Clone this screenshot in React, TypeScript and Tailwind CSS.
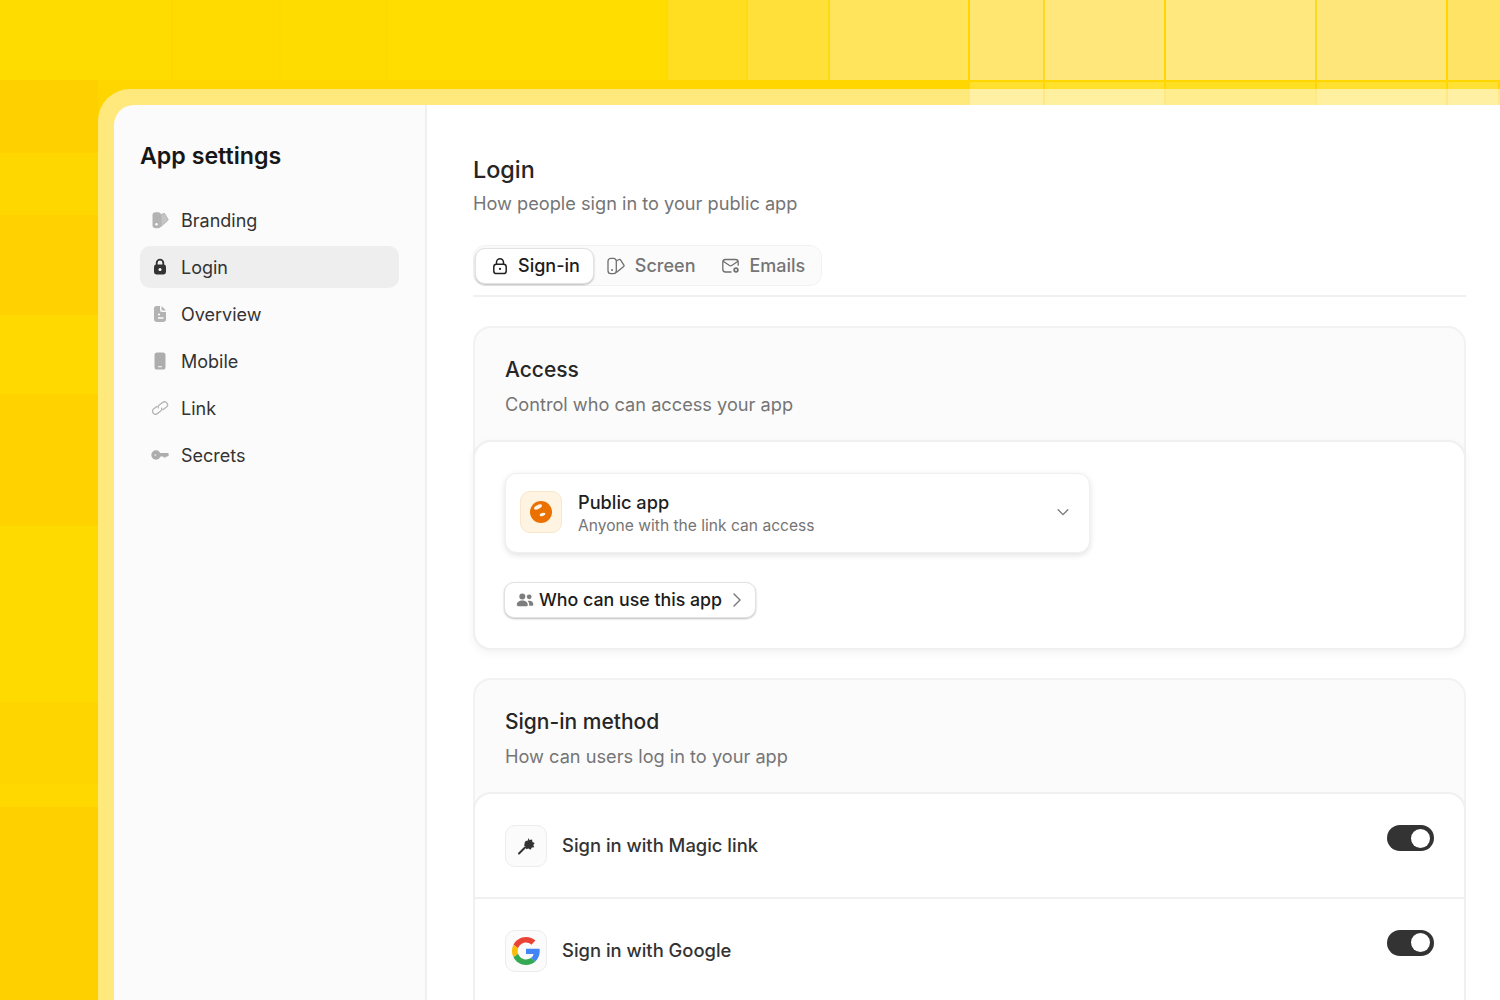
const font = 'font-["Inter",sans-serif]';

const topCells = [
  ['w-[173px]', 'bg-[#ffdc00] border-[#ffd800]'],
  ['w-[108px]', 'bg-[#ffdb00] border-[#ffd800]'],
  ['w-[107px]', 'bg-[#ffdc00] border-[#ffd800]'],
  ['w-[280px]', 'bg-[#ffdd00] border-[#ffda00]'],
  ['w-[80px]', 'bg-[#ffde22] border-[#ffda10]'],
  ['w-[82px]', 'bg-[#ffe03a] border-[#ffd910]'],
  ['w-[140px]', 'bg-[#ffe45c] border-[#ffd600]'],
  ['w-[75px]', 'bg-[#ffe670] border-[#ffd820]'],
  ['w-[121px]', 'bg-[#ffe77c] border-[#ffd600]'],
  ['w-[151px]', 'bg-[#ffe87e] border-[#ffd820]'],
  ['w-[131px]', 'bg-[#ffe67a] border-[#ffd600]'],
  ['flex-1', 'bg-[#ffe364] border-transparent'],
];

const leftStripes = [
  ['h-[73px]', 'bg-[#ffd000]'],
  ['h-[62px]', 'bg-[#ffd700]'],
  ['h-[100px]', 'bg-[#ffd100]'],
  ['h-[79px]', 'bg-[#ffd900]'],
  ['h-[132px]', 'bg-[#ffd200]'],
  ['h-[176px]', 'bg-[#ffda00]'],
  ['h-[82px]', 'bg-[#ffd500]'],
  ['h-[23px]', 'bg-[#ffd800]'],
  ['flex-1', 'bg-[#ffd000]'],
];

const stripCells = [
  ['w-[75px]', 'bg-[#ffe02e]'],
  ['w-[121px]', 'bg-[#ffe02a]'],
  ['w-[151px]', 'bg-[#ffdf22]'],
  ['w-[131px]', 'bg-[#ffe02e]'],
  ['flex-1', 'bg-[#ffe035]'],
];

const frameCells = [
  ['w-[75px]', 'bg-[#fff0a3]'],
  ['w-[121px]', 'bg-[#fff0a0]'],
  ['w-[151px]', 'bg-[#ffed8e]'],
  ['w-[131px]', 'bg-[#fff0a0]'],
  ['flex-1', 'bg-[#fff0a3]'],
];

function PaletteIcon() {
  return (
    <svg width="18" height="18" viewBox="0 0 18 18">
      <path d="M1.500 4.200A3 3 0 0 1 4.500 1.200H7a3 3 0 0 1 3 3v10a3 3 0 0 1-3 3H4.500a3 3 0 0 1-3-3Z" fill="#b3b3b3" />
      <path d="M10 3.800 12 2.600a1.500 1.500 0 0 1 2 .4l3 5.200a1 1 0 0 1-.2 1.300L10 15.500Z" fill="#c4c4c4" stroke="#b3b3b3" strokeWidth=".8" />
      <circle cx="5.500" cy="13.300" r="1.200" fill="#fff" />
    </svg>
  );
}

function LockFilled() {
  return (
    <svg width="16" height="18" viewBox="0 0 16 18" fill="#333">
      <path d="M4.700 7V5a3.300 3.300 0 0 1 6.600 0v2" fill="none" stroke="#333" strokeWidth="1.800" />
      <rect x="2" y="6.500" width="12" height="10" rx="2.400" />
      <circle cx="8" cy="11.500" r="1.500" fill="#fff" />
    </svg>
  );
}

function DocIcon() {
  return (
    <svg width="16" height="18" viewBox="0 0 16 18" fill="#b3b3b3">
      <path d="M2 3.500A2.500 2.500 0 0 1 4.500 1H8v4a2 2 0 0 0 2 2h4v7a3 3 0 0 1-3 3H5a3 3 0 0 1-3-3Z" />
      <path d="M9.500 1 14 5.500h-3.500a1 1 0 0 1-1-1Z" />
      <path d="M6 9.500h2M6 13h5.500" stroke="#fff" strokeWidth="1.400" />
    </svg>
  );
}

function PhoneIcon() {
  return (
    <svg width="14" height="18" viewBox="0 0 14 18" fill="#adadad">
      <rect x="1.500" y="0.500" width="11" height="17" rx="2.600" />
      <rect x="5" y="14.300" width="4" height="1" rx=".5" fill="#fff" />
    </svg>
  );
}

function LinkIcon() {
  return (
    <svg width="18" height="18" viewBox="0 0 18 18" fill="none" stroke="#b5b5b5" strokeWidth="1.300" strokeLinecap="round">
      <g transform="rotate(-35 9 9)">
        <path d="M7.500 6h-4a3 3 0 0 0 0 6h4a3 3 0 0 0 2.800-2" />
        <path d="M10.500 12h4a3 3 0 0 0 0-6h-4a3 3 0 0 0-2.800 2" />
      </g>
    </svg>
  );
}

function KeyIcon() {
  return (
    <svg width="18" height="18" viewBox="0 0 18 18" fill="#adadad">
      <circle cx="5" cy="9" r="4.700" />
      <path d="M7 6.900h9.300a1.400 1.400 0 0 1 1.400 1.400v.9a1.400 1.400 0 0 1-1.400 1.400H15v1h-2.500v-1H7Z" />
      <circle cx="4.300" cy="9" r="1" fill="#dcdcdc" />
    </svg>
  );
}

function LockLine() {
  return (
    <svg width="18" height="18" viewBox="0 0 18 18" fill="none" stroke="#222" strokeWidth="1.500">
      <path d="M5.500 7.500V5.200a3.500 3.500 0 0 1 7 0v2.300" />
      <rect x="2.800" y="7.300" width="12.400" height="9.200" rx="2.600" />
      <circle cx="9" cy="11.900" r="1.100" fill="#222" stroke="none" />
    </svg>
  );
}

function ScreenIcon() {
  return (
    <svg width="18" height="18" viewBox="0 0 18 18" fill="none" stroke="#6f6f6f" strokeWidth="1.300" strokeLinejoin="round">
      <path d="M1 4.200a2.800 2.800 0 0 1 2.800-2.800h2.700A2.800 2.800 0 0 1 9.300 4.200v9.600a2.900 2.900 0 0 1-2.900 2.900H3.900A2.900 2.900 0 0 1 1 13.800Z" />
      <path d="M9.300 4 12 2.500a1.200 1.200 0 0 1 1.500.4l3.400 5.300a1 1 0 0 1-.2 1.300l-7.400 6" />
      <circle cx="5" cy="13" r="1" fill="#6f6f6f" stroke="none" />
    </svg>
  );
}

function MailCog() {
  return (
    <svg width="20" height="18" viewBox="0 0 20 18" fill="none" stroke="#6f6f6f" strokeWidth="1.300" strokeLinecap="round" strokeLinejoin="round">
      <path d="M10 15H4.500A2.700 2.700 0 0 1 1.800 12.300V5.200A2.700 2.700 0 0 1 4.500 2.500h10a2.700 2.700 0 0 1 2.700 2.700v3" />
      <path d="m2.500 4.500 6 4a2 2 0 0 0 2.200 0l6-4" />
      <circle cx="15" cy="13" r="2.700" fill="#6f6f6f" stroke="none" />
      <circle cx="15" cy="13" r="1" fill="#fff" stroke="none" />
    </svg>
  );
}

function PublicIcon() {
  return (
    <svg width="22" height="22" viewBox="0 0 22 22">
      <circle cx="11" cy="11" r="11" fill="#ea7100" />
      <ellipse cx="8" cy="6" rx="4.300" ry="2" transform="rotate(-25 8 6)" fill="#fff6ea" />
      <ellipse cx="12.500" cy="13.500" rx="3" ry="1.500" transform="rotate(-20 12.500 13.500)" fill="#fff6ea" />
    </svg>
  );
}

function UsersIcon() {
  return (
    <svg width="18" height="16" viewBox="0 0 18 16" fill="#7d7d7d">
      <circle cx="6.300" cy="4.500" r="3" />
      <circle cx="13.200" cy="4.800" r="2.400" />
      <path d="M.8 13c0-3 2.400-4.600 5.500-4.600s5.500 1.600 5.500 4.600c0 .8-.5 1.200-1.200 1.200H2c-.7 0-1.200-.4-1.200-1.200Z" />
      <path d="M13 13.800c.2-.3.300-.6.300-1 0-1.500-.6-2.900-1.700-3.800.5-.2 1-.3 1.700-.3 2.500 0 4 1.400 4 3.700 0 .9-.5 1.400-1.200 1.400Z" />
    </svg>
  );
}

function WandIcon() {
  return (
    <svg width="18" height="18" viewBox="0 0 18 18" fill="#333">
      <path d="M11 1l1.600 2 2.500-.6.300 2.500 2.300 1.100-1.400 2 1 2.300-2.500.3-1.200 2.200-2.100-1.300-2.300.7-.3-2.500-2-1.500 2-1.500-.2-2.500 2.500.3Z" />
      <circle cx="11" cy="7" r="3.500" />
      <path d="M8 10.500 2 16.500" stroke="#333" strokeWidth="2" strokeLinecap="round" />
    </svg>
  );
}

function GoogleIcon() {
  return (
    <svg width="28" height="28" viewBox="0 0 48 48">
      <path fill="#EA4335" d="M24 9.500c3.500 0 6.700 1.200 9.200 3.600l6.900-6.900C35.900 2.400 30.500 0 24 0 14.600 0 6.500 5.400 2.600 13.200l8 6.200C12.400 13.700 17.700 9.500 24 9.500z" />
      <path fill="#4285F4" d="M47.500 24.500c0-1.600-.1-3.100-.4-4.500H24v9h12.900c-.6 3-2.200 5.500-4.800 7.200l7.700 6C44.400 37.900 47.500 31.800 47.500 24.500z" />
      <path fill="#FBBC05" d="M10.500 28.600c-.5-1.400-.8-3-.8-4.600s.3-3.200.8-4.600l-8-6.200C.9 16.500 0 20.100 0 24s.9 7.500 2.600 10.800l7.900-6.200z" />
      <path fill="#34A853" d="M24 48c6.500 0 11.900-2.100 15.900-5.800l-7.700-6c-2.200 1.500-4.900 2.300-8.100 2.300-6.300 0-11.600-4.200-13.500-9.900l-8 6.200C6.500 42.600 14.600 48 24 48z" />
    </svg>
  );
}

function Toggle() {
  return (
    <div className="flex h-[26px] w-[47px] items-center justify-end rounded-full bg-[#333333] pr-[4px]">
      <div className="h-[19px] w-[19px] rounded-full bg-white" />
    </div>
  );
}

const navItems = [
  { label: 'Branding', icon: <PaletteIcon /> },
  { label: 'Login', icon: <LockFilled />, active: true },
  { label: 'Overview', icon: <DocIcon /> },
  { label: 'Mobile', icon: <PhoneIcon /> },
  { label: 'Link', icon: <LinkIcon /> },
  { label: 'Secrets', icon: <KeyIcon /> },
];

function Sidebar() {
  return (
    <aside className="flex w-[313px] shrink-0 flex-col border-r-2 border-[#f0f0f0] bg-[#fbfbfb] pl-[26px] pr-[26px] pt-[35px]">
      <h1 className="text-[23.2px] font-semibold leading-[32px] text-[#171717]">App settings</h1>
      <nav className="mt-[27px] flex flex-col gap-[5px]">
        {navItems.map((item) => (
          <div
            key={item.label}
            className={`flex h-[42px] items-center rounded-[10px] pl-[10px] text-[18px] text-[#333333] ${item.active ? 'bg-[#eeeeee]' : ''}`}
          >
            <span className="flex w-[20px] justify-center">{item.icon}</span>
            <span className="ml-[11px]">{item.label}</span>
          </div>
        ))}
      </nav>
    </aside>
  );
}

function Tabs() {
  return (
    <div className="border-b-2 border-[#f0f0f0] pb-[9px]">
      <div className="flex h-[41px] w-[349px] items-center rounded-[12px] border border-[#f1f1f1] bg-[#fbfbfb] pl-[1px] text-[18px] font-medium">
        <div className="flex h-[36px] items-center gap-[9px] rounded-[10px] border border-[#e2e2e2] bg-white pl-[15px] pr-[13px] text-[#1c1c1c] shadow-[0_1px_2px_rgba(0,0,0,0.25)]">
          <LockLine />
          Sign-in
        </div>
        <div className="ml-[13px] flex items-center gap-[10px] text-[#757575]">
          <ScreenIcon />
          Screen
        </div>
        <div className="ml-[26px] flex items-center gap-[8px] text-[#757575]">
          <MailCog />
          Emails
        </div>
      </div>
    </div>
  );
}

function SectionHead({ title, sub }: { title: string; sub: string }) {
  return (
    <div className="px-[30px] pb-[22px] pt-[26px]">
      <h3 className="text-[21px] font-medium leading-[32px] text-[#262626]">{title}</h3>
      <p className="mt-[4px] text-[18.2px] leading-[28px] text-[#757575]">{sub}</p>
    </div>
  );
}

function MethodRow({ icon, label, divider }: { icon: React.ReactNode; label: string; divider?: boolean }) {
  return (
    <div className={`flex items-center px-[30px] ${divider ? 'h-[105px] border-b-2 border-[#f0f0f0]' : 'h-[103px]'}`}>
      <div className="flex h-[42px] w-[42px] items-center justify-center rounded-[10px] border border-[#ececec] bg-[#fbfbfb]">{icon}</div>
      <span className={`ml-[15px] text-[18.4px] font-medium text-[#333333] ${divider ? 'pt-px' : ''}`}>{label}</span>
      <div className={`ml-auto ${divider ? 'mb-[15px]' : 'mb-[16px]'}`}>
        <Toggle />
      </div>
    </div>
  );
}

function Main() {
  return (
    <main className="flex-1 bg-white pl-[46px] pr-[34px] pt-[49px]">
      <h2 className="text-[23.4px] font-medium leading-[32px] text-[#262626]">Login</h2>
      <p className="text-[18.2px] leading-[34px] text-[#757575]">How people sign in to your public app</p>
      <div className="mt-[25px]">
        <Tabs />
      </div>

      <section className="mt-[29px] rounded-[18px] border-2 border-[#f2f2f2] bg-[#fbfbfb]">
        <SectionHead title="Access" sub="Control who can access your app" />
        <div className="-mx-[2px] -mb-[2px] rounded-[18px] border-2 border-[#f0f0f0] bg-white px-[30px] pb-[30px] pt-[31px] shadow-[0_3px_8px_rgba(0,0,0,0.05)]">
          <div className="flex h-[80px] w-[585px] items-center rounded-[12px] border border-[#f0f0f0] bg-white pb-[2px] pl-[14px] pr-[18px] shadow-[0_2px_6px_rgba(0,0,0,0.12)]">
            <div className="flex h-[42px] w-[42px] items-center justify-center rounded-[10px] border border-[#f9e6cd] bg-[#fff3e2]">
              <PublicIcon />
            </div>
            <div className="ml-[16px]">
              <p className="text-[18.2px] font-medium leading-[26px] text-[#1f1f1f]">Public app</p>
              <p className="pt-px text-[15.6px] leading-[20px] text-[#757575]">Anyone with the link can access</p>
            </div>
            <svg width="14" height="14" viewBox="0 0 16 16" fill="none" stroke="#7a7a7a" strokeWidth="1.600" strokeLinecap="round" strokeLinejoin="round" className="ml-auto mr-px">
              <path d="m2.500 5.500 5.500 5.500 5.500-5.500" />
            </svg>
          </div>
          <div className="-ml-px mt-[29px] flex h-[36px] w-[252px] items-center whitespace-nowrap rounded-[10px] border border-[#e2e2e2] bg-white pl-[11px] text-[17.8px] font-medium text-[#1c1c1c] shadow-[0_1px_2px_rgba(0,0,0,0.25)]">
            <UsersIcon />
            <span className="ml-[5px]">Who can use this app</span>
            <svg width="12" height="16" viewBox="0 0 12 16" fill="none" stroke="#757575" strokeWidth="1.400" strokeLinecap="round" strokeLinejoin="round" className="ml-[9px]">
              <path d="m3 2 6 6-6 6" />
            </svg>
          </div>
        </div>
      </section>

      <section className="mt-[28px] rounded-[18px] border-2 border-[#f2f2f2] bg-[#fbfbfb]">
        <SectionHead title="Sign-in method" sub="How can users log in to your app" />
        <div className="-mx-[2px] rounded-t-[18px] border-2 border-b-0 border-[#f0f0f0] bg-white">
          <MethodRow icon={<WandIcon />} label="Sign in with Magic link" divider />
          <MethodRow icon={<GoogleIcon />} label="Sign in with Google" />
        </div>
      </section>
    </main>
  );
}

export default function App() {
  return (
    <div className={`flex h-[1000px] w-[1500px] flex-col overflow-hidden bg-[#ffd500] ${font}`}>
      <div className="flex h-[80px] shrink-0 bg-[#ffd600]">
        {topCells.map(([w, bg], i) => (
          <div key={i} className={`${w} ${bg} shrink-0 border-r-2`} />
        ))}
      </div>
      <div className="flex min-h-0 flex-1">
        <div className="flex w-[98px] shrink-0 flex-col">
          {leftStripes.map(([h, bg], i) => (
            <div key={i} className={`${h} ${bg} shrink-0`} />
          ))}
        </div>
        <div className="flex min-w-0 flex-1 flex-col">
          <div className="flex h-[9px] shrink-0 bg-[#ffd600]">
            <div className="w-[872px] shrink-0" />
            <div className="flex flex-1 pt-[2px]">
              {stripCells.map(([w, bg], i) => (
                <div key={i} className={`${w} ${bg} shrink-0 border-r-2 border-[#ffd600]`} />
              ))}
            </div>
          </div>
          <div className="flex min-h-0 flex-1 flex-col overflow-hidden rounded-tl-[32px] bg-[#ffe87c]">
            <div className="flex h-[16px] shrink-0">
              <div className="w-[872px] shrink-0" />
              {frameCells.map(([w, bg], i) => (
                <div key={i} className={`${w} ${bg} shrink-0 border-r-2 border-[#ffe888]`} />
              ))}
            </div>
            <div className="flex min-h-0 flex-1 pl-[16px]">
              <div className="flex min-w-0 flex-1 overflow-hidden rounded-tl-[20px]">
                <Sidebar />
                <Main />
              </div>
            </div>
          </div>
        </div>
      </div>
    </div>
  );
}
